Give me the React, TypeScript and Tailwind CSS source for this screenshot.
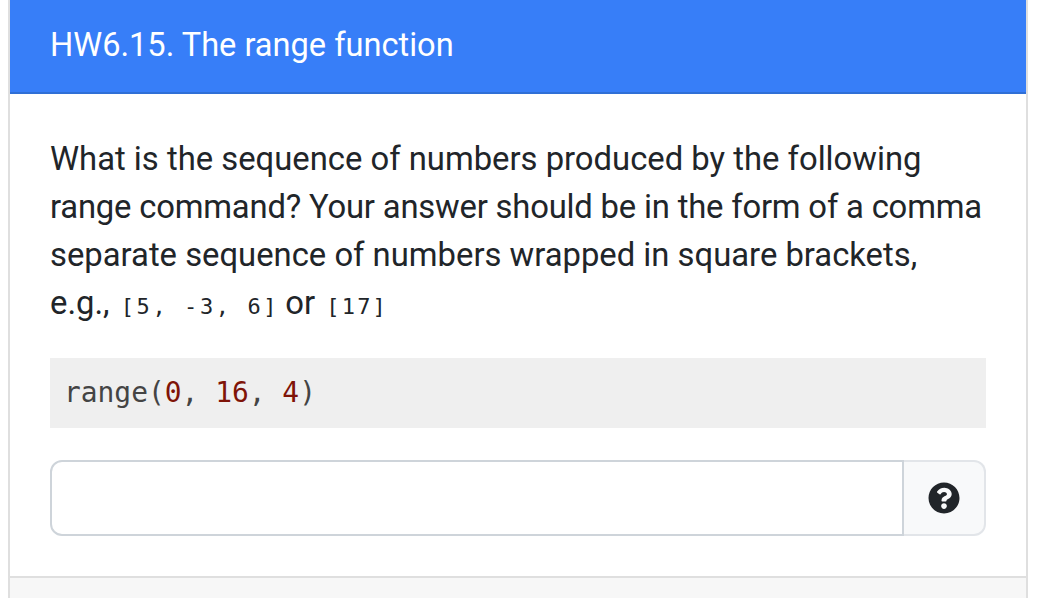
import React from 'react';
import { FaQuestionCircle } from 'react-icons/fa';

const mono = "font-['DejaVu_Sans_Mono','Liberation_Mono',monospace]";

const App: React.FC = () => {
  return (
    <div className="h-[598px] w-[1044px] overflow-hidden bg-white font-['Roboto','Liberation_Sans',sans-serif] text-[#212529]">
      <div className="ml-2 flex h-[598px] w-[1020px] flex-col border-x-2 border-[#dfdfdf]">
        <div className="flex h-[94px] shrink-0 items-center border-b-2 border-[#2f6fd6] bg-[#377ef8] pb-[2px] pl-10 text-[32.6px] text-white">
          HW6.15. The range function
        </div>
        <div className="flex-1 px-10 pt-[41px]">
          <p className="whitespace-nowrap text-[32.8px] leading-[48px]">
            What is the sequence of numbers produced by the following
            <br />
            <span className="tracking-[-0.19px]">range command? Your answer should be in the form of a comma</span>
            <br />
            separate sequence of numbers wrapped in square brackets,
            <br />
            e.g.,{' '}
            <code className={`${mono} ml-[3px] mr-[-2px] text-[22px] tracking-[2.6px]`}>[5, -3, 6]</code> or <code className={`${mono} ml-[3px] text-[22px] tracking-[2.2px]`}>[17]</code>
          </p>
          <pre className={`${mono} mt-[27px] flex h-[70px] w-[936px] items-center bg-[#efefef] pl-[14px] text-[27.9px] text-[#444]`}>
            range(<span className="text-[#7f1408]">0</span>, <span className="text-[#7f1408]">16</span>, <span className="text-[#7f1408]">4</span>)
          </pre>
          <div className="mt-8 flex h-[76px] w-[936px]">
            <input className="min-w-0 flex-1 rounded-l-xl border-2 border-[#ced4da] bg-white" />
            <div className="flex w-[82px] items-center justify-center rounded-r-xl border-2 border-l-0 border-[#e2e5e9] bg-[#f8f9fa] text-[32px]">
              <FaQuestionCircle />
            </div>
          </div>
        </div>
        <div className="h-[22px] shrink-0 border-t-2 border-[#dfdfdf] bg-[#f7f7f7]"></div>
      </div>
    </div>
  );
};

export default App;
